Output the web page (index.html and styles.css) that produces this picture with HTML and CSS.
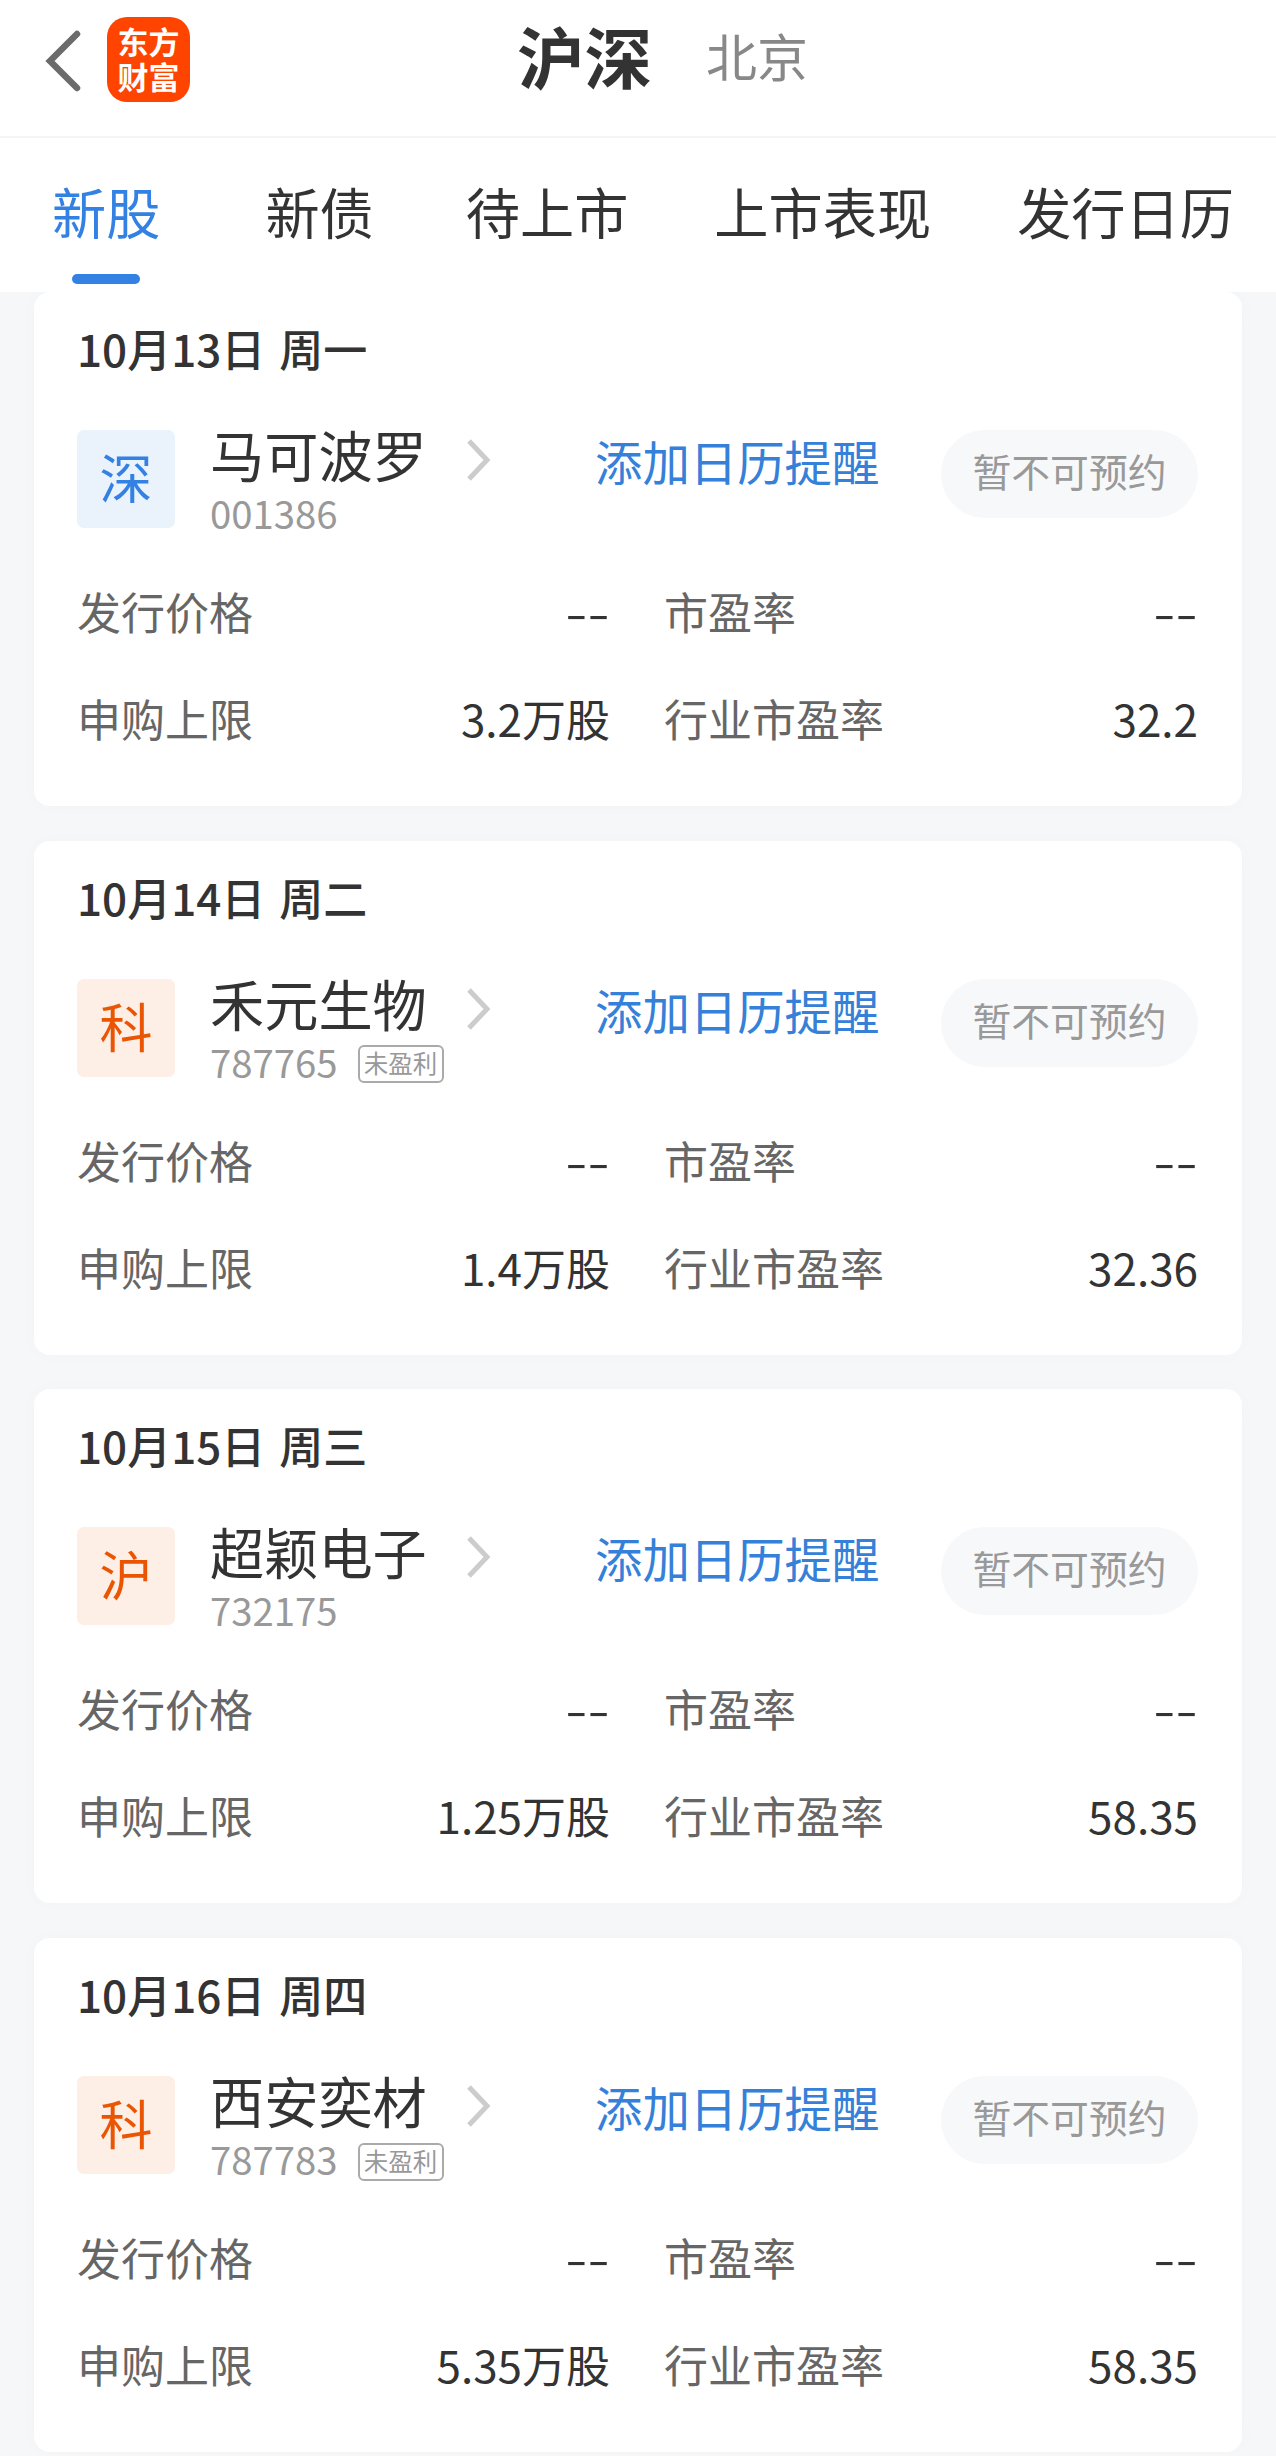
FILE: index.html
```
<!DOCTYPE html>
<html lang="zh-CN">
<head>
<meta charset="UTF-8">
<meta name="viewport" content="width=device-width, initial-scale=1.0">
<title>新股申购</title>
<link rel="stylesheet" href="styles.css">
</head>
<body>
<header class="topbar">
    <svg class="back" width="40" height="66" viewBox="0 0 40 66"><path d="M34 6L7 33L34 60" fill="none" stroke="#6b6b6b" stroke-width="6.5" stroke-linecap="round"/></svg>
    <div class="logo">东方<br>财富</div>
    <h1 class="market active">沪深</h1>
    <span class="market">北京</span>
</header>

<nav class="tabs">
    <a class="tab active">新股</a>
    <a class="tab">新债</a>
    <a class="tab">待上市</a>
    <a class="tab">上市表现</a>
    <a class="tab">发行日历</a>
</nav>

<main class="list">
    <section class="card">
        <h2 class="date">10月13日 周一</h2>
        <div class="stock">
            <div class="badge blue">深</div>
            <div class="info">
                <div class="name">马可波罗<svg class="arrow" width="26" height="44" viewBox="0 0 26 44"><path d="M3 3L21 22L3 41" fill="none" stroke="#ccc" stroke-width="5"/></svg></div>
                <div class="code">001386</div>
            </div>
            <a class="remind">添加日历提醒</a>
            <button class="book">暂不可预约</button>
        </div>
        <div class="row">
            <span class="label">发行价格</span><span class="value"><i class="dash">--</i></span>
            <span class="label">市盈率</span><span class="value"><i class="dash">--</i></span>
        </div>
        <div class="row">
            <span class="label">申购上限</span><span class="value">3.2万股</span>
            <span class="label">行业市盈率</span><span class="value">32.2</span>
        </div>
    </section>

    <section class="card">
        <h2 class="date">10月14日 周二</h2>
        <div class="stock">
            <div class="badge">科</div>
            <div class="info">
                <div class="name">禾元生物<svg class="arrow" width="26" height="44" viewBox="0 0 26 44"><path d="M3 3L21 22L3 41" fill="none" stroke="#ccc" stroke-width="5"/></svg></div>
                <div class="code">787765<span class="tag">未盈利</span></div>
            </div>
            <a class="remind">添加日历提醒</a>
            <button class="book">暂不可预约</button>
        </div>
        <div class="row">
            <span class="label">发行价格</span><span class="value"><i class="dash">--</i></span>
            <span class="label">市盈率</span><span class="value"><i class="dash">--</i></span>
        </div>
        <div class="row">
            <span class="label">申购上限</span><span class="value">1.4万股</span>
            <span class="label">行业市盈率</span><span class="value">32.36</span>
        </div>
    </section>

    <section class="card">
        <h2 class="date">10月15日 周三</h2>
        <div class="stock">
            <div class="badge">沪</div>
            <div class="info">
                <div class="name">超颖电子<svg class="arrow" width="26" height="44" viewBox="0 0 26 44"><path d="M3 3L21 22L3 41" fill="none" stroke="#ccc" stroke-width="5"/></svg></div>
                <div class="code">732175</div>
            </div>
            <a class="remind">添加日历提醒</a>
            <button class="book">暂不可预约</button>
        </div>
        <div class="row">
            <span class="label">发行价格</span><span class="value"><i class="dash">--</i></span>
            <span class="label">市盈率</span><span class="value"><i class="dash">--</i></span>
        </div>
        <div class="row">
            <span class="label">申购上限</span><span class="value">1.25万股</span>
            <span class="label">行业市盈率</span><span class="value">58.35</span>
        </div>
    </section>

    <section class="card">
        <h2 class="date">10月16日 周四</h2>
        <div class="stock">
            <div class="badge">科</div>
            <div class="info">
                <div class="name">西安奕材<svg class="arrow" width="26" height="44" viewBox="0 0 26 44"><path d="M3 3L21 22L3 41" fill="none" stroke="#ccc" stroke-width="5"/></svg></div>
                <div class="code">787783<span class="tag">未盈利</span></div>
            </div>
            <a class="remind">添加日历提醒</a>
            <button class="book">暂不可预约</button>
        </div>
        <div class="row">
            <span class="label">发行价格</span><span class="value"><i class="dash">--</i></span>
            <span class="label">市盈率</span><span class="value"><i class="dash">--</i></span>
        </div>
        <div class="row">
            <span class="label">申购上限</span><span class="value">5.35万股</span>
            <span class="label">行业市盈率</span><span class="value">58.35</span>
        </div>
    </section>
</main>
</body>
</html>
```
FILE: styles.css
```
* {
    box-sizing: border-box;
}
body {
    margin: 0;
    background-color: #f6f7f9;
    color: #333;
    font-family: "Noto Sans CJK SC", sans-serif;
}
.topbar {
    display: flex;
    align-items: center;
    height: 138px;
    padding: 0 43px 20px;
    background-color: #fff;
    border-bottom: 2px solid #f5f5f6;
}
.back {
    margin-top: 6px;
}
.logo {
    width: 83px;
    height: 85px;
    margin: 2px 0 0 24px;
    padding-top: 6px;
    border-radius: 20px;
    background-color: #ff4400;
    color: #fff;
    font-size: 31px;
    font-weight: bold;
    line-height: 35px;
    text-align: center;
}
.market {
    margin: -6px 0 0 54px;
    color: #888;
    font-size: 51px;
    line-height: 80px;
}
.market.active {
    margin-left: 327px;
    color: #333;
    font-size: 67.5px;
    font-weight: bold;
}
.tabs {
    display: flex;
    height: 154px;
    padding-left: 52px;
    background-color: #fff;
}
.tab {
    margin-right: 86px;
    padding-top: 33px;
    font-size: 54.2px;
    line-height: 80px;
    white-space: nowrap;
}
.tab:nth-child(1) {
    margin-right: 105px;
}
.tab:nth-child(2) {
    margin-right: 92px;
}
.tab:last-child {
    margin-right: 0;
}
.tab.active {
    color: #3381e3;
}
.tab.active::after {
    content: "";
    display: block;
    width: 68px;
    height: 10px;
    margin: 23px auto 0;
    border-radius: 5px;
    background-color: #3381e3;
}
.list {
    padding: 0 34px;
    overflow: hidden;
}
.card {
    height: 514px;
    margin-bottom: 34.7px;
    padding: 26px 44px 0 43px;
    border-radius: 16px;
    background-color: #fff;
    box-shadow: 0 0 20px rgba(0, 0, 0, 0.02);
}
.card:last-child {
    margin-bottom: 3px;
}
.date {
    margin: 0 0 52px;
    font-size: 44px;
    font-weight: 500;
    line-height: 60px;
    word-spacing: 4px;
}
.stock {
    display: flex;
    height: 98px;
    margin-bottom: 53px;
}
.badge {
    width: 98px;
    height: 98px;
    border-radius: 7px;
    background-color: #fdeee6;
    color: #ea5504;
    font-size: 53px;
    line-height: 92px;
    text-align: center;
}
.badge.blue {
    background-color: #eaf2fb;
    color: #3381e3;
}
.info {
    width: 385px;
    margin-left: 35px;
}
.name {
    display: flex;
    align-items: center;
    height: 60px;
    margin-top: -6px;
    font-size: 54.2px;
    line-height: 60px;
}
.arrow {
    margin: 12px 0 0 39px;
}
.code {
    display: flex;
    align-items: center;
    height: 60px;
    margin-top: -1px;
    color: #999;
    font-size: 38.3px;
    line-height: 60px;
}
.tag {
    width: 86px;
    height: 38px;
    margin: 5px 0 0 20px;
    border: 2px solid #aaa;
    border-radius: 6px;
    font-size: 24.5px;
    line-height: 32px;
    text-align: center;
}
.remind {
    width: 346px;
    color: #3580d9;
    font-size: 47.4px;
    line-height: 61px;
    white-space: nowrap;
}
.book {
    width: 257px;
    height: 88px;
    padding: 0 0 8px;
    border: none;
    border-radius: 44px;
    background-color: #f7f8fa;
    color: #999;
    font-family: inherit;
    font-size: 38.8px;
}
.row {
    display: grid;
    grid-template-columns: 200px 333px 240px 1fr;
    height: 60px;
    margin-bottom: 47px;
    font-size: 44px;
    line-height: 60px;
}
.label {
    color: #666;
}
.label:nth-child(3) {
    margin-left: 54px;
    white-space: nowrap;
}
.value {
    text-align: right;
}
.dash {
    display: inline-block;
    font-style: normal;
    transform: scaleX(1.45);
    transform-origin: right;
}
```
